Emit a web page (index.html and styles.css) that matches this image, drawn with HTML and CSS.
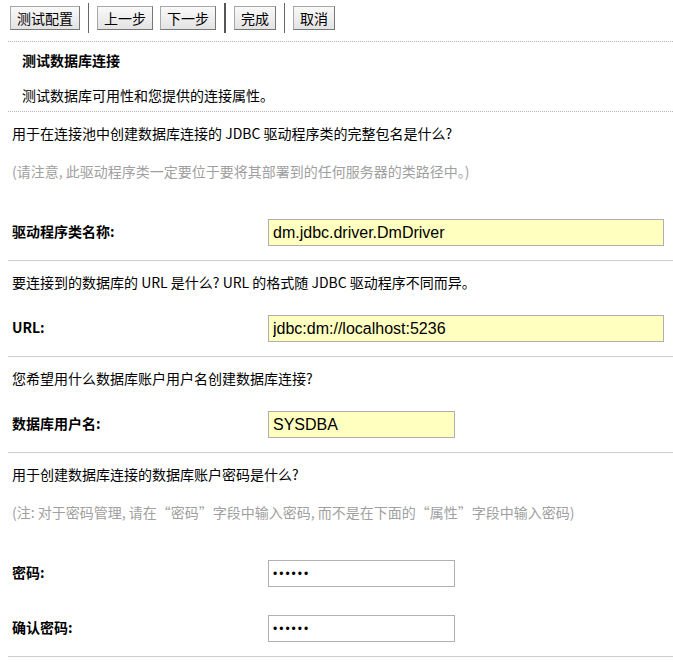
FILE: index.html
```html
<!DOCTYPE html>
<html lang="zh-CN">
<head>
    <meta charset="UTF-8">
    <title>测试配置</title>
    <link rel="stylesheet" href="styles.css">
</head>
<body>
    <div class="wizard">
        <div class="toolbar">
            <button class="btn">测试配置</button>
            <span class="sep"></span>
            <button class="btn">上一步</button>
            <button class="btn btn-next">下一步</button>
            <span class="sep sep-thick"></span>
            <button class="btn">完成</button>
            <span class="sep"></span>
            <button class="btn">取消</button>
        </div>

        <div class="intro">
            <h3>测试数据库连接</h3>
            <p>测试数据库可用性和您提供的连接属性。</p>
        </div>

        <div class="group">
            <p class="question">用于在连接池中创建数据库连接的 JDBC 驱动程序类的完整包名是什么?</p>
            <p class="note">(请注意, 此驱动程序类一定要位于要将其部署到的任何服务器的类路径中。)</p>
            <div class="row">
                <label>驱动程序类名称:</label>
                <input type="text" class="field field-long" value="dm.jdbc.driver.DmDriver">
            </div>
        </div>

        <div class="group">
            <p class="question">要连接到的数据库的 URL 是什么? URL 的格式随 JDBC 驱动程序不同而异。</p>
            <div class="row">
                <label>URL:</label>
                <input type="text" class="field field-long" value="jdbc:dm://localhost:5236">
            </div>
        </div>

        <div class="group">
            <p class="question">您希望用什么数据库账户用户名创建数据库连接?</p>
            <div class="row">
                <label>数据库用户名:</label>
                <input type="text" class="field field-short" value="SYSDBA">
            </div>
        </div>

        <div class="group">
            <p class="question">用于创建数据库连接的数据库账户密码是什么?</p>
            <p class="note">(注: 对于密码管理, 请在“密码”字段中输入密码, 而不是在下面的“属性”字段中输入密码)</p>
            <div class="row">
                <label>密码:</label>
                <input type="password" class="field field-short pwd" value="123456">
            </div>
            <div class="row">
                <label>确认密码:</label>
                <input type="password" class="field field-short pwd" value="123456">
            </div>
        </div>
    </div>
</body>
</html>
```

FILE: styles.css
```css
/* General */
body {
    margin: 0;
    padding: 0;
    background-color: #fff;
    color: #000;
    font-family: "Noto Sans CJK SC", "DejaVu Sans", sans-serif;
    font-size: 14px;
}

p, h3 {
    margin: 0;
}

.wizard {
    margin-left: 8px;
}

/* Toolbar */
.toolbar {
    display: flex;
    align-items: flex-start;
    height: 42px;
    padding-left: 2px;
    border-bottom: 1px dotted #b8b8b8;
    box-sizing: border-box;
}

.btn {
    margin-top: 6px;
    height: 24px;
    padding: 0 6px;
    font-family: inherit;
    font-size: 14px;
    line-height: 20px;
    color: #000;
    background: linear-gradient(#f9f9f9, #e3e3e3);
    border: 1px solid #a8a8a8;
    border-right-color: #777;
    border-bottom-color: #777;
    border-radius: 0;
}

.btn-next {
    margin-left: 7px;
}

.sep {
    width: 1px;
    height: 30px;
    margin: 3px 8px 0;
    background-color: #666;
}

.sep-thick {
    width: 2px;
    background-color: #555;
}

/* Intro */
.intro {
    padding: 8px 0 6px 14px;
    border-bottom: 1px dotted #b8b8b8;
    line-height: 20px;
}

.intro h3 {
    font-size: 14px;
    font-weight: bold;
}

.intro p {
    margin-top: 15px;
}

/* Field groups */
.group {
    padding: 11px 0 14px 4px;
    border-bottom: 1px solid #cccccc;
    line-height: 20px;
}

.group:first-of-type {
    padding-bottom: 15px;
}

.note {
    margin-top: 18px;
    color: #a0a0a0;
}

.row {
    display: flex;
    align-items: center;
    height: 27px;
    margin-top: 23px;
}

.note + .row {
    margin-top: 38px;
}

.row + .row {
    margin-top: 28px;
}

.row label {
    width: 256px;
    font-weight: bold;
    margin-top: -3px;
}

.field {
    height: 27px;
    box-sizing: border-box;
    padding: 0 4px;
    border: 1px solid #b0b0b0;
    background-color: #ffffc0;
    font-family: "Liberation Sans", Arial, sans-serif;
    font-size: 16px;
    color: #000;
    outline: none;
}

.field-long {
    width: 396px;
}

.field-short {
    width: 187px;
}

.pwd {
    background-color: #fff;
    font-size: 12px;
    letter-spacing: 2px;
}
```
